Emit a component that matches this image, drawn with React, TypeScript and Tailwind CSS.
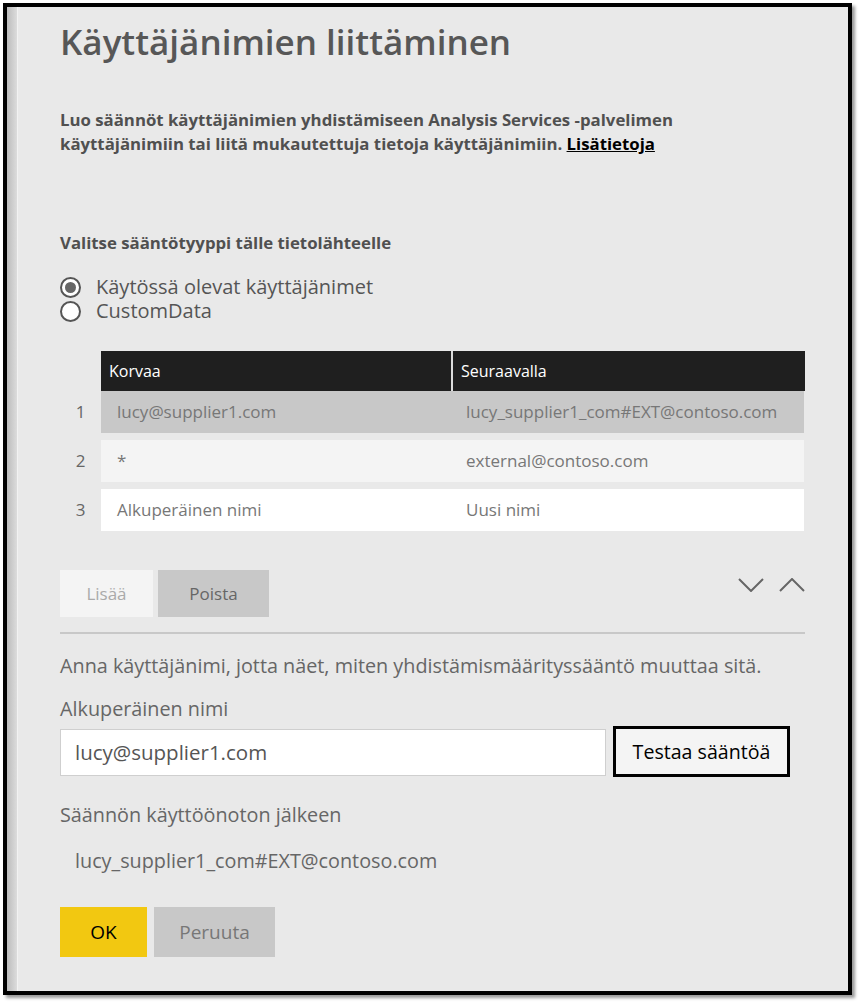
import { Fragment } from 'react'

// rows of the mapping table
const RULES = [
  { n: 1, from: 'lucy@supplier1.com', to: 'lucy_supplier1_com#EXT@contoso.com', bg: 'bg-[#c8c8c8]' },
  { n: 2, from: '*', to: 'external@contoso.com', bg: 'bg-[#f4f4f4]' },
  { n: 3, from: 'Alkuperäinen nimi', to: 'Uusi nimi', bg: 'bg-white' },
]

function Radio({ checked, label }: { checked?: boolean; label: string }) {
  return (
    <div className="flex items-center h-[24px]">
      <span className="w-[21px] h-[21px] rounded-full border-2 border-[#555] bg-white flex items-center justify-center">
        {checked && <span className="w-[11px] h-[11px] rounded-full bg-[#666]" />}
      </span>
      <span className="ml-[15px] text-[20px] leading-[24px] text-[#555]">{label}</span>
    </div>
  )
}

function Chevron({ up }: { up?: boolean }) {
  return (
    <svg width="26" height="14" viewBox="0 0 26 14" fill="none" stroke="#666" strokeWidth="2">
      {up ? <path d="M1 13 L13 1 L25 13" /> : <path d="M1 1 L13 13 L25 1" />}
    </svg>
  )
}

export default function App() {
  return (
    <div className="w-[860px] h-[1002px] bg-white pt-[3px] pl-[3px] font-['Open_Sans',sans-serif]">
      <div className="w-[849px] h-[992px] border-4 border-black bg-[#e9e9e9] shadow-[3px_3px_3px_rgba(0,0,0,0.4)] flex">
        <div className="w-[11px] h-full bg-gradient-to-r from-[#bcbcbc] to-[#dcdcdc] border-r border-[#f2f2f2]" />

        <div className="flex-1 pl-[42px] pr-[43px] flex flex-col">
          <h1 className="mt-[11px] h-[48px] text-[35px] leading-[48px] font-semibold text-[#575757]">
            Käyttäjänimien liittäminen
          </h1>

          <p className="mt-[42px] text-[16.8px] leading-[24px] font-bold text-[#505050]">
            Luo säännöt käyttäjänimien yhdistämiseen Analysis Services -palvelimen
            <br />
            käyttäjänimiin tai liitä mukautettuja tietoja käyttäjänimiin.{' '}
            <a className="text-black underline">Lisätietoja</a>
          </p>

          <p className="mt-[75px] text-[16.8px] leading-[24px] font-bold text-[#505050]">
            Valitse sääntötyyppi tälle tietolähteelle
          </p>

          <div className="mt-[20px] flex flex-col">
            <Radio checked label="Käytössä olevat käyttäjänimet" />
            <Radio label="CustomData" />
          </div>

          {/* mapping table */}
          <div className="mt-[28px] grid grid-cols-[41px_352px_1fr]">
            <div />
            <div className="h-[40px] bg-[#1f1f1f] text-white text-[16px] flex items-center pl-[8px] border-r-2 border-[#dcdcdc]">
              Korvaa
            </div>
            <div className="h-[40px] bg-[#1f1f1f] text-white text-[16px] flex items-center pl-[8px]">
              Seuraavalla
            </div>
            {RULES.map((r, i) => (
              <Fragment key={r.n}>
                <div className={`h-[42px] flex items-center justify-center text-[17px] text-[#666] ${i > 0 ? 'mt-[7px]' : ''}`}>
                  {r.n}
                </div>
                <div className={`h-[42px] flex items-center pl-[16px] text-[17px] text-[#777] ${r.bg} ${i > 0 ? 'mt-[7px]' : ''}`}>
                  {r.from}
                </div>
                <div className={`h-[42px] flex items-center pl-[13px] mr-[1px] text-[17px] text-[#777] ${r.bg} ${i > 0 ? 'mt-[7px]' : ''}`}>
                  {r.to}
                </div>
              </Fragment>
            ))}
          </div>

          <div className="mt-[39px] flex items-start">
            <button className="w-[93px] h-[47px] bg-[#f4f4f4] text-[17px] text-[#aaa]">Lisää</button>
            <button className="ml-[5px] w-[111px] h-[47px] bg-[#c8c8c8] text-[17px] text-[#666]">Poista</button>
            <div className="ml-auto mt-[8px] flex gap-[15px]">
              <Chevron />
              <Chevron up />
            </div>
          </div>

          <div className="mt-[15px] h-[2px] bg-[#c8c8c8]" />

          <p className="mt-[20px] text-[19.8px] leading-[24px] text-[#666]">
            Anna käyttäjänimi, jotta näet, miten yhdistämismääritys­sääntö muuttaa sitä.
          </p>

          <p className="mt-[19px] text-[19.8px] leading-[24px] text-[#666]">Alkuperäinen nimi</p>

          <div className="mt-[5px] flex items-start">
            <div className="mt-[3px] w-[546px] h-[47px] bg-white border border-[#cfcfcf] flex items-center pl-[14px] text-[20.5px] text-[#555]">
              lucy@supplier1.com
            </div>
            <button className="ml-[7px] w-[177px] h-[51px] bg-[#f4f4f4] border-[3px] border-black text-[19.6px] text-black">
              Testaa sääntöä
            </button>
          </div>

          <p className="mt-[26px] text-[19.8px] leading-[24px] text-[#666]">Säännön käyttöönoton jälkeen</p>

          <p className="mt-[22px] pl-[15px] text-[19.8px] leading-[24px] text-[#666]">
            lucy_supplier1_com#EXT@contoso.com
          </p>

          <div className="mt-[34px] flex gap-[7px]">
            <button className="w-[87px] h-[50px] bg-[#f2c811] text-[19px] text-black">OK</button>
            <button className="w-[121px] h-[50px] bg-[#c8c8c8] text-[19px] text-[#777]">Peruuta</button>
          </div>
        </div>
      </div>
    </div>
  )
}
